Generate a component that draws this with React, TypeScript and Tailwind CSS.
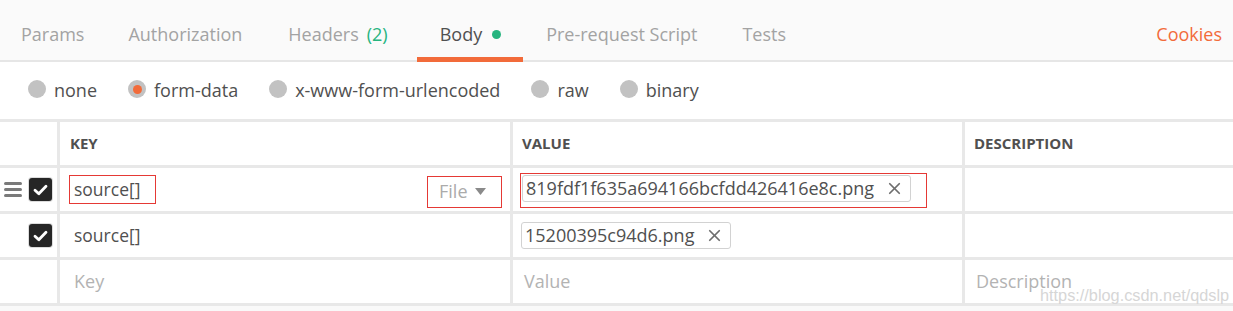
import { X } from "lucide-react"

const tabs = [
  { label: "Params", pad: "pl-[21px] pr-[22px]" },
  { label: "Authorization", pad: "pl-[22px] pr-[23px]" },
  { label: "Headers", count: "(2)", pad: "pl-[23px] pr-[29px]" },
  { label: "Body", active: true, pad: "pl-[23px] pr-[22px] gap-[10px]" },
  { label: "Pre-request Script", pad: "pl-[23px] pr-[22px]" },
  { label: "Tests", pad: "pl-[23px] pr-[22px]" },
]

const bodyTypes = ["none", "form-data", "x-www-form-urlencoded", "raw", "binary"]

function Checkbox() {
  return (
    <div className="w-[23px] h-[23px] rounded-[3px] bg-[#262626] ring-1 ring-[#dcdcdc] flex items-center justify-center">
      <svg width="15" height="12" viewBox="0 0 15 12" fill="none">
        <path d="M2 6.2 L5.8 9.8 L13 2.2" stroke="white" strokeWidth="2.8" strokeLinecap="round" strokeLinejoin="round" />
      </svg>
    </div>
  )
}

function Handle() {
  return (
    <div className="flex flex-col gap-[3px] w-[18px]">
      <span className="h-[3px] bg-[#7a7a7a] rounded-full" />
      <span className="h-[3px] bg-[#7a7a7a] rounded-full" />
      <span className="h-[3px] bg-[#7a7a7a] rounded-full" />
    </div>
  )
}

function FileChip({ name }: { name: string }) {
  return (
    <div className="h-[27px] flex items-center gap-[11px] pl-[3px] pr-[6px] border border-[#d2d2d2] rounded-[3px] text-[18px] text-[#505050] bg-white">
      <span>{name}</span>
      <X size={19} strokeWidth={2.2} className="text-[#6e6e6e]" />
    </div>
  )
}

export default function App() {
  return (
    <div className="relative w-[1233px] h-[311px] overflow-hidden bg-[#f9f9f9] font-['Open_Sans',sans-serif]">
      {/* Tabs */}
      <div className="h-[62px] bg-[#fafafa] border-b-2 border-[#e6e6e6] flex items-stretch">
        {tabs.map((t) => (
          <div
            key={t.label}
            className={`${t.pad} flex items-center gap-2 text-[18px] border-b-[5px] -mb-[2px] pt-[11px] ${
              t.active ? "border-[#f26b3a] text-[#505050]" : "border-transparent text-[#a3a3a3]"
            }`}
          >
            <span>{t.label}</span>
            {t.count && <span className="text-[#26b47f]">{t.count}</span>}
            {t.active && <span className="w-[9px] h-[9px] rounded-full bg-[#26b47f]" />}
          </div>
        ))}
        <div className="ml-auto pr-[11px] flex items-center pt-[11px] mb-[3px] text-[18px] text-[#f26b3a]">Cookies</div>
      </div>

      {/* Body type radios */}
      <div className="h-[57px] bg-white flex items-center pl-[28px] gap-[31px]">
        {bodyTypes.map((b) => (
          <div key={b} className="flex items-center gap-[8px] text-[18px] text-[#505050]">
            <span className="w-[18px] h-[18px] rounded-full bg-[#c2c2c2] flex items-center justify-center -mt-[3px]">
              {b === "form-data" && <span className="w-[9px] h-[9px] rounded-full bg-[#f26b3a]" />}
            </span>
            <span>{b}</span>
          </div>
        ))}
      </div>

      {/* Table */}
      <div className="grid grid-cols-[57px_450px_449px_1fr] grid-rows-[43px_43px_43px_43px] gap-[3px] py-[3px] bg-[#e8e8e8]">
        {/* header */}
        <div className="bg-white" />
        <div className="bg-white flex items-center pl-[10px] text-[15px] font-bold text-[#505050]">KEY</div>
        <div className="bg-white flex items-center pl-[9px] text-[15px] font-bold text-[#505050]">VALUE</div>
        <div className="bg-white flex items-center pl-[9px] text-[15px] font-bold text-[#505050]">DESCRIPTION</div>

        {/* row 1 */}
        <div className="bg-white flex items-center pl-[4px] gap-[7px]">
          <Handle />
          <Checkbox />
        </div>
        <div className="bg-white flex items-center justify-between pl-[9px] pr-[8px]">
          <div className="h-[29px] w-[87px] border border-[#e53935] flex items-center pl-[4px] text-[17.5px] text-[#505050]">
            source[]
          </div>
          <div className="h-[32px] w-[75px] border border-[#e53935] flex items-center pl-[11px] gap-[7px] text-[18px] text-[#ababab] mt-[4px]">
            File
            <svg width="11" height="7" viewBox="0 0 11 7">
              <path d="M0 0 H11 L5.5 7 Z" fill="#8a8a8a" />
            </svg>
          </div>
        </div>
        <div className="bg-white flex items-center pl-[7px]">
          <div className="h-[35px] w-[407px] border border-[#e53935] pt-[1px] pl-[1px] mt-[2px]">
            <div className="w-fit">
              <FileChip name="819fdf1f635a694166bcfdd426416e8c.png" />
            </div>
          </div>
        </div>
        <div className="bg-white" />

        {/* row 2 */}
        <div className="bg-white flex items-center pl-[29px]">
          <Checkbox />
        </div>
        <div className="bg-white flex items-center pl-[14px] text-[17.5px] text-[#505050]">source[]</div>
        <div className="bg-white flex items-center pl-[8px]">
          <FileChip name="15200395c94d6.png" />
        </div>
        <div className="bg-white" />

        {/* row 3 */}
        <div className="bg-white" />
        <div className="bg-white flex items-center pl-[14px] text-[18px] text-[#b3b3b3]">Key</div>
        <div className="bg-white flex items-center pl-[11px] text-[18px] text-[#b3b3b3]">Value</div>
        <div className="bg-white flex items-center pl-[11px] text-[18px] text-[#b3b3b3]">Description</div>
      </div>

      {/* watermark */}
      <div className="absolute left-[1040px] top-[283px] text-[16.3px] font-['Liberation_Sans',sans-serif] text-[#d6d6d6]">
        https://blog.csdn.net/qdslp
      </div>
    </div>
  )
}
